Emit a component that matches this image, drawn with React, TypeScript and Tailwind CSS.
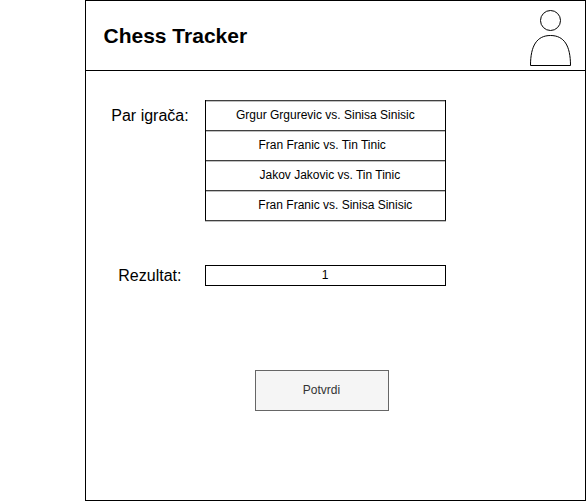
const matches = [
  { label: "Grgur Grgurevic vs. Sinisa Sinisic", pad: "pl-[30px]" },
  { label: "Fran Franic vs. Tin Tinic", pad: "pl-[52.5px]" },
  { label: "Jakov Jakovic vs. Tin Tinic", pad: "pl-[53.5px]" },
  { label: "Fran Franic vs. Sinisa Sinisic", pad: "pl-[52.3px]" },
];

function UserIcon() {
  return (
    <svg className="mt-[8px] self-start" width="42" height="58" viewBox="0 0 42 58" fill="white" stroke="black" strokeWidth="1">
      <ellipse cx="21.5" cy="11.5" rx="10" ry="10" />
      <path d="M1.5 56.5C1.5 36.5 8 26.5 21.5 26.5S41.5 36.5 41.5 56.5Z" />
    </svg>
  );
}

export default function App() {
  return (
    <div className="flex h-[501px] w-[586px] bg-white pl-[85px] font-['Liberation_Sans',Arial,sans-serif] text-black">
      <div className="flex w-[501px] flex-col border border-black">
        <header className="flex h-[70px] items-center justify-between border-b border-black pl-[17.5px] pr-[14px]">
          <h1 className="text-[21px] font-bold leading-6">Chess Tracker</h1>
          <UserIcon />
        </header>
        <main className="flex flex-col pt-[29px]">
          <section className="flex">
            <h2 className="w-[119px] pl-[25.3px] pt-[4px] text-[16px] leading-6">Par igrača:</h2>
            <ul className="h-[121px] w-[241px] border-x border-b border-x-black border-b-[#404040] text-[12px] shadow-[0_1px_0_#c0c0c0]">
              {matches.map((m) => (
                <li
                  key={m.label}
                  className={`h-[30px] border-t border-[#404040] leading-[28px] shadow-[inset_0_1px_0_#c0c0c0] ${m.pad}`}
                >
                  {m.label}
                </li>
              ))}
            </ul>
          </section>
          <section className="mt-[44px] flex">
            <h2 className="w-[119px] pl-[32.3px] text-[16px] leading-[21px]">Rezultat:</h2>
            <div className="h-[21px] w-[241px] border border-black pr-px text-center text-[12px] leading-[19px]">1</div>
          </section>
          <button className="ml-[169px] mt-[84px] h-[41px] w-[134px] border border-[#666666] bg-[#f5f5f5] pb-[2px] pr-px text-[12px] text-[#333333]">
            Potvrdi
          </button>
        </main>
      </div>
    </div>
  );
}
